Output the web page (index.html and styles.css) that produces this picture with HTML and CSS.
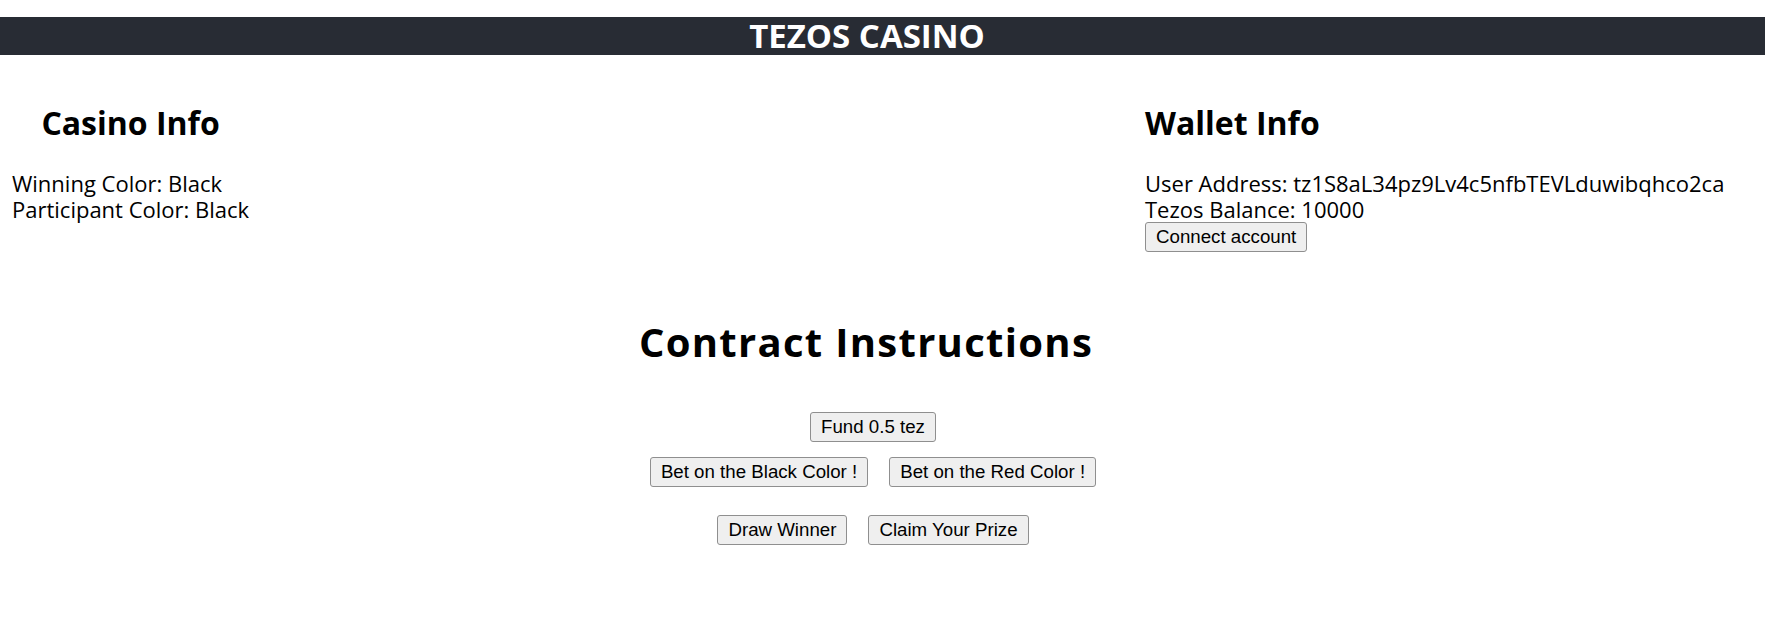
FILE: index.html
```html
<!DOCTYPE html>
<html lang="en">
<head>
<meta charset="utf-8">
<title>Tezos Casino</title>
<link rel="stylesheet" href="styles.css">
</head>
<body>
<header class="app-header">
  <h1 class="app-title">TEZOS CASINO</h1>
</header>
<main class="app-main">
  <section class="info-row">
    <div class="info-col casino-info">
      <h2 class="info-title">Casino Info</h2>
      <p class="info-line">Winning Color: Black</p>
      <p class="info-line">Participant Color: Black</p>
    </div>
    <div class="info-col wallet-info">
      <h2 class="info-title wallet-title">Wallet Info</h2>
      <p class="info-line">User Address: tz1S8aL34pz9Lv4c5nfbTEVLduwibqhco2ca</p>
      <p class="info-line">Tezos Balance: 10000</p>
      <button class="btn" type="button">Connect account</button>
    </div>
  </section>
  <section class="contract">
    <h2 class="contract-title">Contract Instructions</h2>
    <div class="btn-row row-fund">
      <button class="btn" type="button">Fund 0.5 tez</button>
    </div>
    <div class="btn-row row-bet">
      <button class="btn" type="button">Bet on the Black Color !</button>
      <button class="btn" type="button">Bet on the Red Color !</button>
    </div>
    <div class="btn-row row-draw">
      <button class="btn" type="button">Draw Winner</button>
      <button class="btn" type="button">Claim Your Prize</button>
    </div>
  </section>
</main>
</body>
</html>
```

FILE: styles.css
```css
* { box-sizing: border-box; }

body {
  margin: 0;
  background: #ffffff;
  color: #000000;
  font-family: "Open Sans", "Noto Sans", sans-serif;
}

.app-header {
  margin-top: 17px;
  height: 38px;
  background: #282c34;
  padding-right: 31px;
  text-align: center;
}

.app-title {
  margin: 0;
  font-family: "Open Sans", sans-serif;
  font-weight: 700;
  font-size: 33px;
  line-height: 38px;
  color: #ffffff;
}

.info-row {
  display: grid;
  grid-template-columns: 1133px auto;
  padding-left: 12px;
  margin-top: 49px;
}

.info-col {
  justify-self: start;
  display: flex;
  flex-direction: column;
  align-items: flex-start;
}

.info-title {
  align-self: stretch;
  text-align: center;
  margin: 0 0 28px;
  font-size: 32px;
  font-weight: 700;
  line-height: 38px;
}

.wallet-title { text-align: left; }

.info-line {
  margin: 0;
  font-size: 22px;
  line-height: 26px;
}

.btn {
  font-family: "Liberation Sans", Arial, sans-serif;
  font-size: 18.7px;
  line-height: 20px;
  padding: 4px 10px;
  color: #000000;
  background: #efefef;
  border: 1px solid #8f8f8f;
  border-radius: 3px;
}

.contract {
  display: flex;
  flex-direction: column;
  align-items: center;
  padding-right: 33px;
  margin-top: 66px;
}

.contract-title {
  margin: 0 0 46px;
  font-size: 40px;
  font-weight: 700;
  letter-spacing: 1.3px;
  line-height: 48px;
}

.btn-row {
  display: flex;
  justify-content: center;
  gap: 21px;
  padding-left: 14px;
}

.row-bet { margin-top: 15px; }
.row-draw { margin-top: 28px; }
```
